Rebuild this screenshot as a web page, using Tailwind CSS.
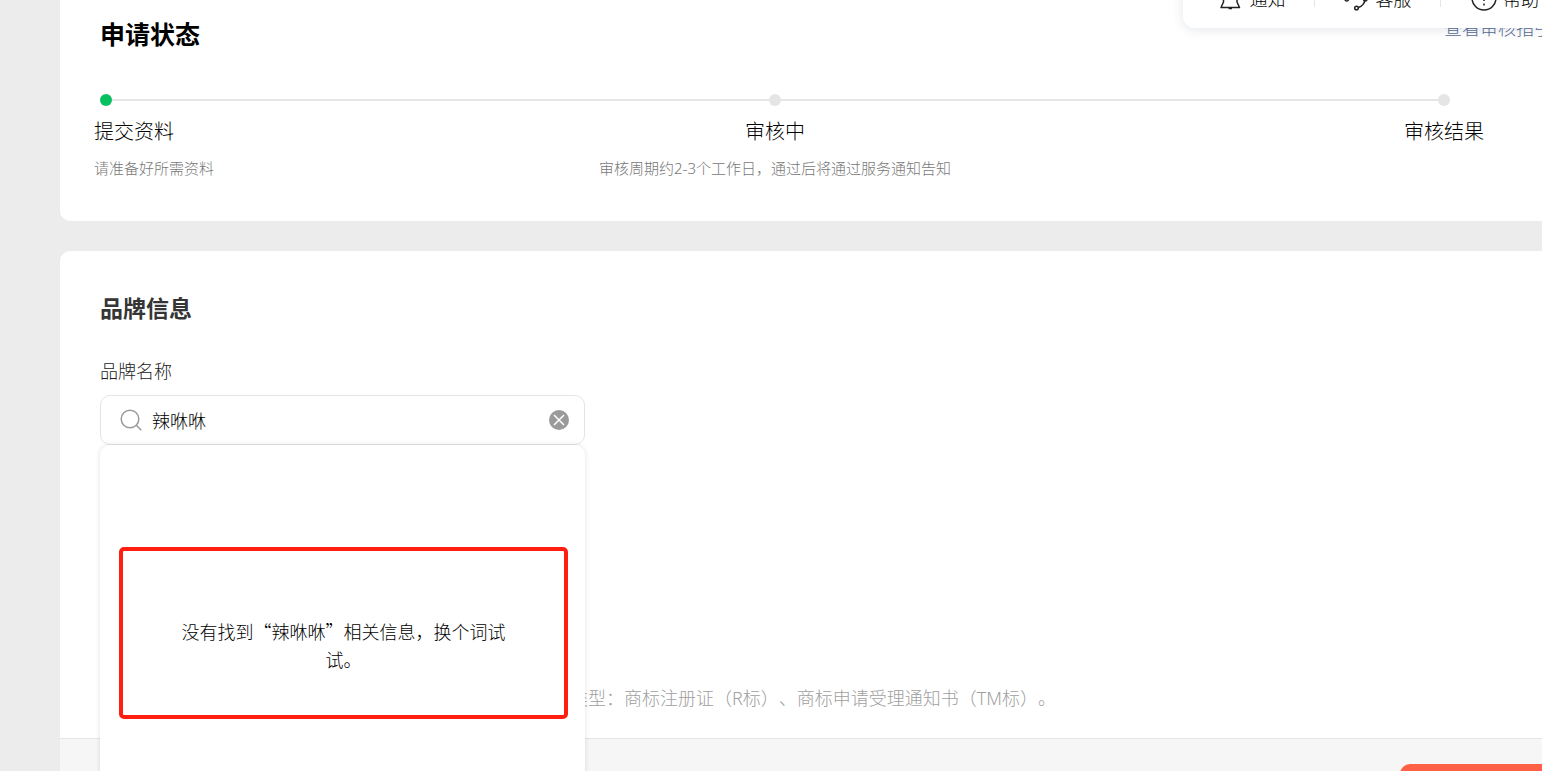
<!DOCTYPE html>
<html lang="zh-CN">
<head>
<meta charset="utf-8">
<title>品牌申请</title>
<script src="https://cdn.jsdelivr.net/npm/@tailwindcss/browser@4"></script>
</head>
<body class="relative h-screen overflow-hidden bg-[#ececec] font-['Noto_Sans_CJK_SC',sans-serif] text-[18px] font-light text-black [text-spacing-trim:space-all]">

<main class="flex h-full flex-col gap-[30px] pl-[60px]">

  <section class="h-[221px] shrink-0 rounded-bl-[10px] bg-white pt-[15px]">
    <div class="flex items-start justify-between pl-10">
      <h1 class="text-[25px] leading-9 font-bold">申请状态</h1>
      <a href="#" class="-mr-2.5 whitespace-nowrap leading-6 text-[#576b95]">查看审核指引</a>
    </div>

    <div class="mt-[43px] mr-[92px] ml-10">
      <div class="flex items-center">
        <span class="size-3 rounded-full bg-[#07c160]"></span>
        <span class="h-0.5 flex-1 bg-[#e5e5e5]"></span>
        <span class="size-3 rounded-full bg-[#e5e5e5]"></span>
        <span class="h-0.5 flex-1 bg-[#e5e5e5]"></span>
        <span class="size-3 rounded-full bg-[#e5e5e5]"></span>
      </div>
      <ol class="mt-[9px] grid grid-cols-3 text-[20px] leading-8">
        <li class="-ml-1.5">
          <h3>提交资料</h3>
          <p class="mt-[9px] text-[15px] leading-6 text-[#777]">请准备好所需资料</p>
        </li>
        <li class="text-center">
          <h3>审核中</h3>
          <p class="mt-[9px] font-['Noto_Sans','Noto_Sans_CJK_SC',sans-serif] text-[15px] leading-6 text-[#777]">审核周期约2-3个工作日，通过后将通过服务通知告知</p>
        </li>
        <li class="-mr-[34px] text-right">
          <h3>审核结果</h3>
        </li>
      </ol>
    </div>
  </section>

  <section class="flex flex-1 flex-col rounded-tl-[10px] bg-white pt-[38px]">
    <div class="flex-1 pl-10">
      <h2 class="text-[23px] leading-9 font-bold text-[#353535]">品牌信息</h2>
      <label for="brand" class="mt-[33px] block leading-6 text-[#222]">品牌名称</label>
      <div class="relative mt-[13px] w-[485px]">
        <div class="flex h-[50px] items-center rounded-[10px] border border-[#e4e4e4] bg-white pr-[15px] pl-[19px]">
          <svg class="size-[22px] shrink-0" viewBox="0 0 22 22" fill="none" stroke="#9a9a9a" stroke-width="1.5"><circle cx="10" cy="10" r="8.800"/><path d="M16 16 21.300 21.300"/></svg>
          <input id="brand" type="text" value="辣咻咻" class="ml-2.5 min-w-0 flex-1 bg-transparent font-light outline-none">
          <button type="button" aria-label="清除" class="size-5 shrink-0">
            <svg class="size-5" viewBox="0 0 20 20"><circle cx="10" cy="10" r="10" fill="#9a9a9a"/><path d="M5 5 15 15M15 5 5 15" stroke="#fff" stroke-width="1.5"/></svg>
          </button>
        </div>
        <div class="absolute top-full left-0 z-10 h-[360px] w-full rounded-[10px] bg-white pt-[102px] pr-[17px] pl-[19px] shadow-[0_0_5px_rgba(0,0,0,0.12)]">
          <div class="h-[172px] rounded-[5px] border-4 border-[#ff1e10] pt-[66px]">
            <p class="mx-auto max-w-[340px] text-center leading-7">没有找到“辣咻咻”相关信息，换个词试试。</p>
          </div>
        </div>
      </div>
      <p class="mt-[241px] pl-[470px] font-['Noto_Sans','Noto_Sans_CJK_SC',sans-serif] leading-6 whitespace-nowrap text-[#a0a0a0]">类型：商标注册证（R标）、商标申请受理通知书（TM标）。</p>
    </div>
    <footer class="flex h-[33px] justify-end overflow-hidden border-t border-[#e5e5e5] bg-[#f6f6f6] pt-[25px]">
      <button type="button" aria-label="提交" class="h-12 w-[142px] rounded-l-[10px] bg-[#ff6146]"></button>
    </footer>
  </section>
</main>

<nav class="absolute -top-8 right-0 z-20 flex h-[60px] w-[359px] items-center rounded-bl-[12px] bg-white pl-1.5 whitespace-nowrap shadow-[0_2px_12px_rgba(40,60,90,0.12)]">
  <a href="#" class="flex h-[18px] w-[126px] shrink-0 items-center justify-center gap-2 border-r border-[#e5e5e5]">
    <svg class="size-6" viewBox="0 0 24 24" fill="none" stroke="#222" stroke-width="1.5" stroke-linejoin="round"><path d="M3 21.500H21.500L19 16V9a6.800 6.800 0 0 0-13.500 0v7ZM10.500 22.500h3.500M12.250 2V.500"/></svg>通知
  </a>
  <a href="#" class="flex h-[18px] w-[126px] shrink-0 items-center justify-center gap-2 border-r border-[#e5e5e5]">
    <svg class="size-6 overflow-visible" viewBox="0 0 24 24" fill="none" stroke="#222" stroke-width="1.5"><path d="M3 13V9a9 9 0 0 1 18 0v4c0 4-3 7.500-6.500 8.500"/><rect x="1" y="9" width="3.500" height="6" rx="1.700"/><rect x="19.500" y="9" width="3.500" height="6" rx="1.700"/><circle cx="12.500" cy="22" r="1.800"/></svg>客服
  </a>
  <a href="#" class="flex h-[18px] shrink-0 items-center gap-1.5 pl-[30px]">
    <svg class="size-[26px]" viewBox="0 0 26 26" fill="none" stroke="#222" stroke-width="1.500"><circle cx="13" cy="13" r="12"/><path d="M9.500 9.500a3.500 3.500 0 1 1 5 3q-1.500 1-1.500 3.500M13 18.500v2"/></svg>帮助
  </a>
</nav>
</body>
</html>
